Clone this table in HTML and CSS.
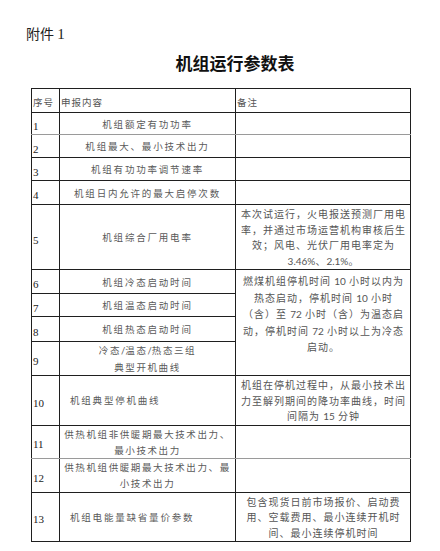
FILE: index.html
```html
<!DOCTYPE html>
<html lang="zh-CN">
<head>
<meta charset="utf-8">
<title>机组运行参数表</title>
<link rel="stylesheet" href="styles.css">
</head>
<body>
<div class="page">
  <p class="attach">附件 <span class="latin">1</span></p>
  <h1 class="title">机组运行参数表</h1>
  <table class="params">
    <colgroup><col class="c-no"><col class="c-item"><col class="c-note"></colgroup>
    <tr class="r-head"><td class="hd">序号</td><td class="hd">申报内容</td><td class="hd">备注</td></tr>
    <tr class="r1 gray-b"><td class="no">1</td><td class="item">机组额定有功功率</td><td class="note"></td></tr>
    <tr class="r2"><td class="no">2</td><td class="item">机组最大、最小技术出力</td><td class="note"></td></tr>
    <tr class="r3"><td class="no">3</td><td class="item">机组有功功率调节速率</td><td class="note"></td></tr>
    <tr class="r4"><td class="no">4</td><td class="item">机组日内允许的最大启停次数</td><td class="note"></td></tr>
    <tr class="r5"><td class="no">5</td><td class="item">机组综合厂用电率</td><td class="note">本次试运行，火电报送预测厂用电<br>率，并通过市场运营机构审核后生<br>效；风电、光伏厂用电率定为<br><span class="lat">3.46%</span>、<span class="lat">2.1%</span>。</td></tr>
    <tr class="r6"><td class="no">6</td><td class="item">机组冷态启动时间</td><td class="note tall" rowspan="4">燃煤机组停机时间 <span class="lat">10</span> 小时以内为<br>热态启动，停机时间 <span class="lat">10</span> 小时<br>（含）至 <span class="lat">72</span> 小时（含）为温态启<br>动，停机时间 <span class="lat">72</span> 小时以上为冷态<br>启动。</td></tr>
    <tr class="r7"><td class="no">7</td><td class="item">机组温态启动时间</td></tr>
    <tr class="r8"><td class="no">8</td><td class="item">机组热态启动时间</td></tr>
    <tr class="r9"><td class="no">9</td><td class="item two">冷态<span class="lat">/</span>温态<span class="lat">/</span>热态三组<br>典型开机曲线</td></tr>
    <tr class="r10"><td class="no">10</td><td class="item left">机组典型停机曲线</td><td class="note">机组在停机过程中，从最小技术出<br>力至解列期间的降功率曲线，时间<br>间隔为 <span class="lat">15</span> 分钟</td></tr>
    <tr class="r11 gray-b"><td class="no">11</td><td class="item two">供热机组非供暖期最大技术出力、<br>最小技术出力</td><td class="note"></td></tr>
    <tr class="r12"><td class="no">12</td><td class="item two">供热机组供暖期最大技术出力、最<br>小技术出力</td><td class="note"></td></tr>
    <tr class="r13"><td class="no">13</td><td class="item left">机组电能量缺省量价参数</td><td class="note">包含现货日前市场报价、启动费<br>用、空载费用、最小连续开机时<br>间、最小连续停机时间</td></tr>
  </table>
</div>
</body>
</html>
```

FILE: styles.css
```css
html, body {
  margin: 0;
  padding: 0;
  background: #ffffff;
}

.page {
  width: 440px;
  height: 551px;
  overflow: hidden;
  font-family: "Noto Sans CJK SC", "Noto Sans", sans-serif;
  color: #222;
}

.attach {
  margin: 23px 0 0 26px;
  font-size: 14px;
  line-height: 20px;
  color: #222;
}

.latin {
  font-family: "Liberation Serif", serif;
  font-size: 15px;
}

.title {
  margin: 7px 0 0 0;
  padding-left: 30px;
  text-align: center;
  font-size: 17px;
  line-height: 24px;
  font-weight: bold;
  color: #111;
}

.params {
  margin: 13px 0 0 31px;
  border-collapse: collapse;
  table-layout: fixed;
  width: 379px;
}

.c-no { width: 28px; }
.c-item { width: 176px; }
.c-note { width: 175px; }

.params td {
  border: 1px solid #1f1f1f;
  padding: 0;
  vertical-align: middle;
}

.gray-b td {
  border-bottom-color: #9a9a9a;
}

.hd {
  font-size: 9.5px;
  letter-spacing: 1px;
  color: #555;
  padding: 3px 0 0 1px !important;
  text-align: left;
}

.no {
  font-family: "Liberation Serif", serif;
  font-size: 11px;
  color: #222;
  padding: 5px 0 0 1px !important;
}

.item {
  font-size: 9.5px;
  letter-spacing: 1.8px;
  color: #5a5a5a;
  text-align: center;
  line-height: 16px;
}

.item.two {
  letter-spacing: 1.6px;
}

.item.left {
  text-align: left;
  padding-left: 10px !important;
}

.note {
  font-size: 10px;
  letter-spacing: 1px;
  color: #555;
  text-align: center;
  vertical-align: top !important;
  line-height: 15.5px;
  padding: 1px 1px 0 2px !important;
}

.note.tall {
  line-height: 16.5px;
  padding-top: 3px !important;
}

.lat {
  font-family: "Lato", "Noto Sans", sans-serif;
  letter-spacing: 0;
}

.r-head { height: 24px; }
.r1 { height: 22px; }
.r2 { height: 23px; }
.r3 { height: 23px; }
.r4 { height: 24px; }
.r5 { height: 65px; }
.r6 { height: 24px; }
.r7 { height: 23px; }
.r8 { height: 25px; }
.r9 { height: 33px; }
.r10 { height: 49px; }
.r11 { height: 33px; }
.r12 { height: 34px; }
.r13 { height: 49px; }
```
